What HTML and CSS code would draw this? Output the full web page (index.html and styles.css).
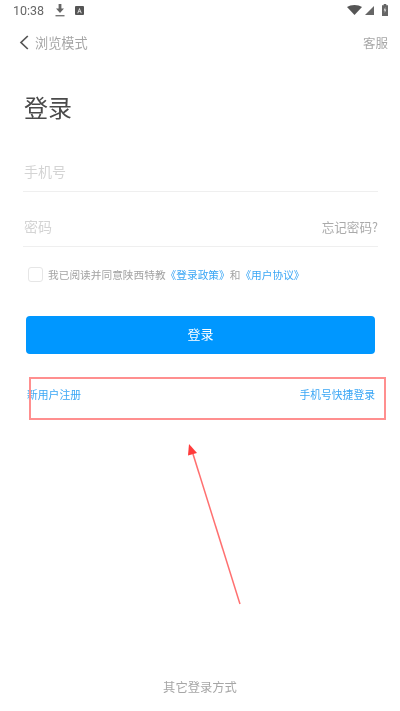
FILE: index.html
```html
<!DOCTYPE html>
<html lang="zh">
<head>
<meta charset="utf-8">
<title>登录</title>
<link rel="stylesheet" href="styles.css">
</head>
<body>
<div class="screen">
  <header class="status">
    <div class="status-left">
      <span class="time">10:38</span>
      <svg class="ic-download" width="10" height="13" viewBox="0 0 10 13"><path d="M3.600 0h2.800v4.500H9L5 9 1 4.500h2.600z" fill="#666"/><rect x="0.500" y="11" width="9" height="1.400" fill="#777"/></svg>
      <svg class="ic-a" width="9" height="9" viewBox="0 0 9 9"><rect width="9" height="9" rx="1" fill="#555"/><path d="M4.500 1.800 6.800 7.200H5.700L5.300 6.100H3.700L3.300 7.200H2.200zM4 5.200h1L4.500 3.800z" fill="#ddd"/></svg>
    </div>
    <div class="status-right">
      <svg width="15" height="10" viewBox="0 0 15 10"><path d="M0 2C2 .7 4.600 0 7.500 0S13 .7 15 2L7.500 10z" fill="#555"/></svg>
      <svg width="9" height="9" viewBox="0 0 9 9"><path d="M9 0v9H0z" fill="#666"/></svg>
      <svg class="ic-batt" width="6" height="12" viewBox="0 0 6 12"><path d="M1.700 0h2.600v1.200H6V12H0V1.200h1.700z" fill="#666"/><path d="M3.300 3 1.700 6.500h1v2.500L4.300 5.500h-1z" fill="#ddd"/></svg>
    </div>
  </header>

  <nav class="nav">
    <div class="nav-back">
      <svg width="10" height="15" viewBox="0 0 10 15"><path d="M8.800 1 2 7.500 8.800 14" fill="none" stroke="#555" stroke-width="1.700"/></svg>
      <span class="nav-label">浏览模式</span>
    </div>
    <span class="nav-service">客服</span>
  </nav>

  <h1 class="title">登录</h1>

  <div class="field field-phone"><span class="placeholder">手机号</span></div>
  <div class="field field-pass">
    <span class="placeholder">密码</span>
    <span class="forgot">忘记密码?</span>
  </div>

  <div class="agree">
    <span class="check"></span>
    <span class="agree-text">我已阅读并同意陕西特教<a class="link">《登录政策》</a>和<a class="link">《用户协议》</a></span>
  </div>

  <button class="submit" type="button">登录</button>

  <div class="links">
    <a class="link">新用户注册</a>
    <a class="link">手机号快捷登录</a>
  </div>

  <footer class="other">其它登录方式</footer>

  <div class="note-box"></div>
  <svg class="note-arrow" width="60" height="165" viewBox="0 0 60 165">
    <path d="M52 160 5 10" fill="none" stroke="#ff7070" stroke-width="1.500"/>
    <path d="M1 0 9 9 0 11.500z" fill="#ff3c3c"/>
  </svg>
</div>
</body>
</html>
```
FILE: styles.css
```css
* { box-sizing: border-box; }
html, body { margin: 0; padding: 0; background: #fff; }
body { font-family: "Noto Sans CJK SC", "Noto Sans", sans-serif; }
.screen {
  position: relative;
  width: 400px;
  height: 711px;
  overflow: hidden;
  display: flex;
  flex-direction: column;
  background: #fff;
  filter: blur(0.5px);
}
.status {
  height: 20px;
  margin-bottom: 2px;
  padding: 0 12px 0 13px;
  display: flex;
  justify-content: space-between;
  align-items: center;
}
.status-left { display: flex; align-items: center; }
.time { font-family: Roboto, sans-serif; font-size: 12.500px; color: #666; width: 31px; }
.ic-download { margin-left: 11px; }
.ic-a { margin-left: 10px; }
.status-right { display: flex; align-items: center; gap: 3px; }
.ic-batt { margin-left: 5px; }
.nav {
  height: 24px;
  margin-top: 8px;
  padding: 0 12px 0 19px;
  display: flex;
  justify-content: space-between;
  align-items: center;
}
.nav-back { display: flex; align-items: center; gap: 6px; }
.nav-label { font-size: 13.200px; color: #a6a6a6; }
.nav-service { font-size: 12.500px; color: #a6a6a6; }
.title {
  margin: 35px 0 0 24px;
  height: 36px;
  line-height: 36px;
  font-size: 24px;
  font-weight: 400;
  color: #4a4a4a;
}
.field {
  margin: 0 22px 0 23px;
  padding: 0 0 0 1px;
  border-bottom: 1px solid #efefef;
  display: flex;
  justify-content: space-between;
  align-items: center;
}
.field-phone { margin-top: 19px; height: 48px; padding-top: 7px; }
.field-pass { height: 55px; padding-top: 14px; }
.placeholder { font-size: 14px; color: #d4d4d4; }
.forgot { font-size: 12.600px; color: #aaa; }
.agree {
  margin: 19px 0 0 28px;
  display: flex;
  align-items: center;
  gap: 5px;
  height: 16px;
}
.check {
  width: 15px;
  height: 15px;
  border: 1.500px solid #e6e6e6;
  border-radius: 3px;
}
.agree-text { font-size: 10.700px; color: #a3a3a3; white-space: nowrap; }
.link { color: #3aa6f5; }
.submit {
  margin: 34px 25px 0 26px;
  height: 38px;
  border: 0;
  border-radius: 4px;
  background: #0097ff;
  color: #fff;
  font-family: inherit;
  font-size: 13px;
  padding: 0 0 3px;
}
.links {
  margin: 30px 25px 0 27px;
  height: 20px;
  display: flex;
  justify-content: space-between;
  align-items: center;
  font-size: 10.800px;
}
.other {
  margin-top: auto;
  margin-bottom: 15px;
  text-align: center;
  font-size: 12.300px;
  color: #a6a6a6;
}
.note-box {
  position: absolute;
  left: 29px;
  top: 377px;
  width: 357px;
  height: 43px;
  border: 2px solid #ff8f8f;
}
.note-arrow {
  position: absolute;
  left: 188px;
  top: 444px;
}
```
